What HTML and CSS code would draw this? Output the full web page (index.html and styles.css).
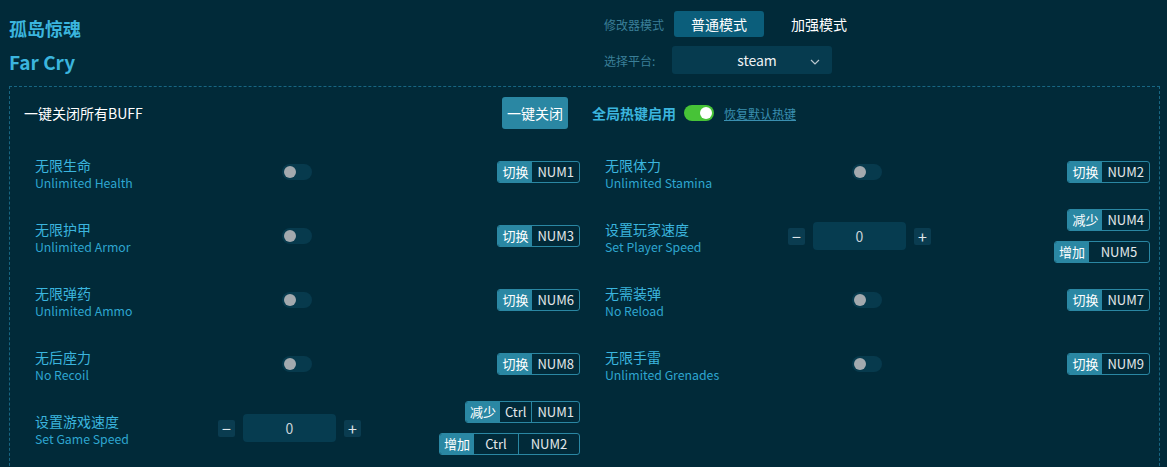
FILE: index.html
```html
<!DOCTYPE html>
<html lang="zh">
<head>
    <meta charset="UTF-8">
    <title>孤岛惊魂 Far Cry</title>
    <link rel="stylesheet" href="styles.css">
</head>
<body>
    <div class="header">
        <div class="title">
            <h1>孤岛惊魂</h1>
            <h2>Far Cry</h2>
        </div>
        <div class="mode">
            <div class="mode-row">
                <span class="mode-label">修改器模式</span>
                <span class="mode-btn active">普通模式</span>
                <span class="mode-btn">加强模式</span>
            </div>
            <div class="mode-row">
                <span class="mode-label short">选择平台:</span>
                <div class="select">
                    <span>steam</span>
                    <svg class="chevron" width="10" height="6" viewBox="0 0 10 6"><path d="M1 1l4 4 4-4" fill="none" stroke="#b9c7cf" stroke-width="1.2"/></svg>
                </div>
            </div>
        </div>
    </div>

    <div class="panel">
        <div class="panel-top">
            <span class="all-off">一键关闭所有BUFF</span>
            <button class="off-btn">一键关闭</button>
            <span class="hotkey-label">全局热键启用</span>
            <span class="switch on"><i></i></span>
            <a class="reset" href="#">恢复默认热键</a>
        </div>

        <div class="grid">
            <div class="item">
                <div class="name"><div class="cn">无限生命</div><div class="en">Unlimited Health</div></div>
                <div><span class="switch"><i></i></span></div>
                <div class="keys"><div class="key"><span class="act">切换</span><span class="k">NUM1</span></div></div>
            </div>
            <div class="item">
                <div class="name"><div class="cn">无限体力</div><div class="en">Unlimited Stamina</div></div>
                <div><span class="switch"><i></i></span></div>
                <div class="keys"><div class="key"><span class="act">切换</span><span class="k">NUM2</span></div></div>
            </div>

            <div class="item">
                <div class="name"><div class="cn">无限护甲</div><div class="en">Unlimited Armor</div></div>
                <div><span class="switch"><i></i></span></div>
                <div class="keys"><div class="key"><span class="act">切换</span><span class="k">NUM3</span></div></div>
            </div>
            <div class="item">
                <div class="name"><div class="cn">设置玩家速度</div><div class="en">Set Player Speed</div></div>
                <div class="stepper"><span class="sbtn">&minus;</span><span class="value">0</span><span class="sbtn">+</span></div>
                <div class="keys">
                    <div class="key"><span class="act">减少</span><span class="k">NUM4</span></div>
                    <div class="key wide"><span class="act">增加</span><span class="k w60">NUM5</span></div>
                </div>
            </div>

            <div class="item">
                <div class="name"><div class="cn">无限弹药</div><div class="en">Unlimited Ammo</div></div>
                <div><span class="switch"><i></i></span></div>
                <div class="keys"><div class="key"><span class="act">切换</span><span class="k">NUM6</span></div></div>
            </div>
            <div class="item">
                <div class="name"><div class="cn">无需装弹</div><div class="en">No Reload</div></div>
                <div><span class="switch"><i></i></span></div>
                <div class="keys"><div class="key"><span class="act">切换</span><span class="k">NUM7</span></div></div>
            </div>

            <div class="item">
                <div class="name"><div class="cn">无后座力</div><div class="en">No Recoil</div></div>
                <div><span class="switch"><i></i></span></div>
                <div class="keys"><div class="key"><span class="act">切换</span><span class="k">NUM8</span></div></div>
            </div>
            <div class="item">
                <div class="name"><div class="cn">无限手雷</div><div class="en">Unlimited Grenades</div></div>
                <div><span class="switch"><i></i></span></div>
                <div class="keys"><div class="key"><span class="act">切换</span><span class="k">NUM9</span></div></div>
            </div>

            <div class="item">
                <div class="name"><div class="cn">设置游戏速度</div><div class="en">Set Game Speed</div></div>
                <div class="stepper"><span class="sbtn">&minus;</span><span class="value">0</span><span class="sbtn">+</span></div>
                <div class="keys">
                    <div class="key"><span class="act">减少</span><span class="k">Ctrl</span><span class="k sep">NUM1</span></div>
                    <div class="key"><span class="act">增加</span><span class="k w44">Ctrl</span><span class="k sep w60">NUM2</span></div>
                </div>
            </div>
        </div>
    </div>
</body>
</html>
```

FILE: styles.css
```css
body {
    margin: 0;
    width: 1167px;
    height: 467px;
    overflow: hidden;
    background-color: #012a39;
    font-family: "Microsoft YaHei", "Noto Sans CJK SC", sans-serif;
    color: #fff;
}
.header {
    display: flex;
    height: 86px;
    padding-left: 9px;
}
.title {
    width: 595px;
}
.title h1 {
    margin: 16px 0 0;
    font-size: 18px;
    line-height: 24px;
    color: #3bb5de;
}
.title h2 {
    margin: 9px 0 0;
    font-size: 19px;
    line-height: 26px;
    color: #3bb5de;
}
.mode {
    display: flex;
    flex-direction: column;
    gap: 9px;
    padding-top: 11px;
}
.mode-row {
    display: flex;
    align-items: center;
}
.mode-label {
    width: 70px;
    font-size: 12px;
    color: #3a7f98;
}
.mode-label.short {
    width: 68px;
}
.mode-btn {
    width: 90px;
    height: 26px;
    line-height: 26px;
    margin-right: 10px;
    text-align: center;
    font-size: 14px;
    border-radius: 3px;
}
.mode-btn.active {
    background-color: #0b5e7b;
}
.select {
    position: relative;
    width: 160px;
    height: 28px;
    line-height: 28px;
    padding-left: 10px;
    box-sizing: border-box;
    text-align: center;
    font-size: 14px;
    color: #eef2f4;
    background-color: #063b4f;
    border-radius: 3px;
}
.chevron {
    position: absolute;
    right: 12px;
    top: 13px;
}
.panel {
    margin-left: 9px;
    width: 1151px;
    height: 400px;
    box-sizing: border-box;
    border: 1px dashed #176683;
    padding: 10px 9px 0 14px;
}
.panel-top {
    display: flex;
    align-items: center;
    height: 32px;
}
.all-off {
    width: 478px;
    font-size: 14px;
}
.off-btn {
    width: 66px;
    height: 32px;
    padding: 0;
    border: none;
    border-radius: 3px;
    background-color: #2a87a3;
    color: #fff;
    font-family: inherit;
    font-size: 14px;
}
.hotkey-label {
    margin-left: 24px;
    font-size: 14px;
    font-weight: bold;
    color: #3bb5de;
}
.reset {
    margin-left: 10px;
    font-size: 12px;
    color: #3a8fb0;
}
.switch {
    position: relative;
    display: block;
    width: 30px;
    height: 16px;
    border-radius: 8px;
    background-color: #073a4d;
}
.switch i {
    position: absolute;
    left: 2px;
    top: 2px;
    width: 12px;
    height: 12px;
    border-radius: 50%;
    background-color: #a3a9ae;
}
.switch.on {
    margin-left: 8px;
    background-color: #47c337;
}
.switch.on i {
    left: auto;
    right: 2px;
    background-color: #fff;
}
.grid {
    display: grid;
    grid-template-columns: 556px 556px;
    grid-auto-rows: 64px;
    column-gap: 14px;
    margin-top: 11px;
}
.item {
    display: grid;
    grid-template-columns: 183px 1fr auto;
    align-items: center;
    padding-left: 11px;
}
.item .switch {
    margin-left: 64px;
    margin-bottom: 1px;
}
.name {
    padding-top: 3px;
}
.cn {
    font-size: 14px;
    line-height: 18px;
    color: #3bb5de;
}
.en {
    font-size: 12.3px;
    line-height: 18px;
    color: #2ea6d0;
}
.keys {
    display: flex;
    flex-direction: column;
    align-items: flex-end;
    gap: 10px;
}
.key {
    display: flex;
    height: 22px;
    box-sizing: border-box;
    border: 1px solid #2a87a3;
    border-radius: 3px;
    overflow: hidden;
    font-size: 13px;
    line-height: 20px;
}
.key .act {
    padding: 0 4px;
    background-color: #2a87a3;
    color: #fff;
}
.key .k {
    padding: 0 5px;
    color: #e4e8ea;
    text-align: center;
}
.key .sep {
    border-left: 1px solid #2a87a3;
}
.key .w44 {
    width: 44px;
    padding: 0;
}
.key .w60 {
    width: 60px;
    padding: 0;
}
.stepper {
    display: flex;
    align-items: center;
    gap: 8px;
}
.sbtn {
    width: 17px;
    height: 17px;
    line-height: 16px;
    text-align: center;
    font-size: 16px;
    color: #dfe6ea;
    background-color: #0a3c50;
    border-radius: 2px;
}
.value {
    width: 93px;
    height: 28px;
    line-height: 28px;
    text-align: center;
    font-size: 14px;
    color: #c9d3d8;
    background-color: #063c50;
    border-radius: 4px;
}
```
